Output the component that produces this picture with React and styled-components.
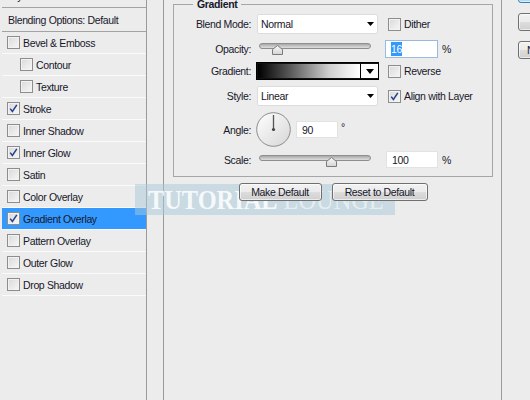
import React from 'react'
import styled, { createGlobalStyle } from 'styled-components'

const Global = createGlobalStyle`
  html, body {
    margin: 0;
    padding: 0;
    background: #ececec;
    overflow: hidden;
  }
  body {
    font-family: 'Liberation Sans', Arial, sans-serif;
    font-size: 10.5px;
    letter-spacing: -0.35px;
    color: #17172a;
  }
`

const Page = styled.div`
  position: relative;
  display: flex;
  width: 530px;
  height: 400px;
  overflow: hidden;
  background: #ececec;
`

/* left list of effects */

const List = styled.div`
  flex: none;
  width: 147px;
  box-sizing: border-box;
  margin-top: -15px;
  padding-left: 2px;
  border-right: 1px solid #9a9a9a;
`

const Item = styled.div`
  display: flex;
  align-items: center;
  gap: 3px;
  box-sizing: border-box;
  height: ${ p => p.h || 22 }px;
  padding-left: ${ p => p.indent ? 18 : p.plain ? 6 : 5 }px;
  border-bottom: 1px solid ${ p => p.dark ? '#a3a3a3' : '#fafafa' };
  background: ${ p => p.active ? '#3399ff' : 'transparent' };
  white-space: nowrap;
`

const Box = styled.span`
  flex: none;
  display: inline-flex;
  align-items: center;
  justify-content: center;
  width: 13px;
  height: 13px;
  box-sizing: border-box;
  border: 1px solid #8d8d8d;
  background: linear-gradient(135deg, #d9d9d9, #f7f7f7);
  box-shadow: inset 0 0 0 1px #f2f2f2;
`

const Check = ({ checked }) => (
  <Box>
    {
      checked &&
        <svg width='11' height='11' viewBox='0 0 11 11'>
          <path d='M2.2 5.6 L4.4 8.4 L8.8 1.8' fill='none' stroke='#233f8f' strokeWidth='1.5' />
        </svg>
    }
  </Box>
)

const effects = [
  { label: 'Bevel & Emboss' },
  { label: 'Contour', indent: true },
  { label: 'Texture', indent: true },
  { label: 'Stroke', checked: true },
  { label: 'Inner Shadow' },
  { label: 'Inner Glow', checked: true },
  { label: 'Satin' },
  { label: 'Color Overlay' },
  { label: 'Gradient Overlay', checked: true, active: true },
  { label: 'Pattern Overlay' },
  { label: 'Outer Glow' },
  { label: 'Drop Shadow' },
]

/* centre frame */

const Frame = styled.div`
  flex: none;
  display: flex;
  flex-direction: column;
  width: 339px;
  box-sizing: border-box;
  margin-left: 16px;
  padding: 0 8px 0 9px;
  border-left: 1px solid #9a9a9a;
  border-right: 1px solid #9a9a9a;
`

const Group = styled.fieldset`
  margin: -2px 0 0;
  padding: 3px 0 8px;
  border: 1px solid #a6a6a6;
  min-width: 0;
`

const Legend = styled.legend`
  margin-left: 19px;
  padding: 0 4px;
  font-weight: bold;
  line-height: 13px;
`

const Row = styled.div`
  display: flex;
  align-items: center;
  height: ${ p => p.h }px;
  margin-top: ${ p => p.mt || 0 }px;
`

const Label = styled.span`
  flex: none;
  width: 77px;
  margin-right: 6px;
  text-align: right;
`

const Select = styled.div`
  flex: none;
  display: flex;
  align-items: center;
  justify-content: space-between;
  width: 121px;
  height: 20px;
  box-sizing: border-box;
  padding: 0 3px 0 3px;
  background: #fff;
  border: 1px solid #dcdcdc;
  border-radius: 2px;
`

const Arrow = ({ w = 7, h = 4 }) => (
  <svg width={ w } height={ h } viewBox={ `0 0 ${ w } ${ h }` }>
    <path d={ `M0 0 H${ w } L${ w / 2 } ${ h } Z` } fill='#000' />
  </svg>
)

const Option = styled.label`
  display: flex;
  align-items: center;
  gap: 3px;
  margin-left: ${ p => p.ml || 10 }px;
  white-space: nowrap;
`

const Field = styled.div`
  flex: none;
  display: flex;
  align-items: center;
  width: ${ p => p.w }px;
  height: ${ p => p.h || 18 }px;
  box-sizing: border-box;
  margin-left: ${ p => p.ml || 0 }px;
  padding-left: 5px;
  background: #fff;
  border: 1px solid ${ p => p.focus ? '#95bbe2' : '#e2e2e2' };
`

const Selected = styled.span`
  background: #3399ff;
  color: #fff;
  padding: 1px 0;
`

const Unit = styled.span`
  margin-left: 4px;
`

const Degree = styled.span`
  align-self: flex-start;
  margin: 9px 0 0 3px;
`

const Slider = styled.div`
  position: relative;
  flex: none;
  width: 120px;
  height: 18px;
  align-self: flex-start;
  padding-top: ${ p => p.top }px;
  box-sizing: border-box;
`

const Track = styled.div`
  margin-left: 2px;
  width: 112px;
  height: 6px;
  box-sizing: border-box;
  border: 1px solid #8e8e8e;
  border-radius: 3px;
  background: linear-gradient(#a9a9a9, #dedede);
`

const Thumb = styled.svg`
  position: absolute;
  top: ${ p => p.top }px;
`

const SliderControl = ({ value, min, max, top }) => {
  const x = 2 + ( value - min ) / ( max - min ) * 112 - 5
  return (
    <Slider top={ top }>
      <Track />
      <Thumb top={ top + 2 } width='11' height='10' viewBox='0 0 11 10' style={{ left: x }}>
        <defs>
          <linearGradient id='thumbFill' x1='0' y1='0' x2='0' y2='1'>
            <stop offset='0' stopColor='#fafafa' />
            <stop offset='1' stopColor='#d4d4d4' />
          </linearGradient>
        </defs>
        <path d='M0.5 9.5 V4.5 L5.5 0.5 L10.5 4.5 V9.5 Z' fill='url(#thumbFill)' stroke='#7a7a7a' />
      </Thumb>
    </Slider>
  )
}

const GradientPicker = styled.div`
  flex: none;
  display: flex;
  width: 123px;
  height: 18px;
  box-sizing: border-box;
  margin-left: -1px;
  border: 1px solid #000;
  box-shadow: inset 0 0 0 1px #222;
`

const Ramp = styled.div`
  flex: 1;
  background: linear-gradient(to right, #000 0%, #555 30%, #cfcfcf 70%, #fff 100%);
  border: 1px solid #111;
  border-right: none;
`

const Drop = styled.div`
  flex: none;
  display: flex;
  align-items: center;
  justify-content: center;
  width: 17px;
  background: #fff;
  border-left: 1px solid #000;
  border-top: 1px solid #111;
  border-bottom: 1px solid #111;
`

const Dial = styled.svg`
  flex: none;
  margin-left: -1px;
`

const Buttons = styled.div`
  position: relative;
  z-index: 1;
  display: flex;
  justify-content: center;
  gap: 10px;
  margin-top: 6px;
`

const Button = styled.div`
  flex: none;
  display: flex;
  align-items: center;
  justify-content: ${ p => p.left ? 'flex-start' : 'center' };
  width: ${ p => p.w }px;
  height: 18px;
  box-sizing: border-box;
  padding-left: ${ p => p.left ? 8 : 0 }px;
  border: 1px solid ${ p => p.primary ? '#3c7fb1' : '#707070' };
  border-radius: 3px;
  background: ${ p => p.primary
    ? 'linear-gradient(#eaf6fd, #d9f0fc 50%, #bee6fd 51%, #a7d9f5)'
    : 'linear-gradient(#f2f2f2, #ebebeb 50%, #dddddd 51%, #cfcfcf)' };
  box-shadow: inset 0 0 0 1px rgba(255, 255, 255, 0.6);
  white-space: nowrap;
`

/* right column */

const Side = styled.div`
  flex: none;
  display: flex;
  flex-direction: column;
  gap: 10px;
  margin: -15px 0 0 16px;
`

/* watermark overlay */

const Watermark = styled.div`
  position: absolute;
  left: 135px;
  top: 184px;
  width: 260px;
  height: 31px;
  overflow: hidden;
  background: rgba(168, 200, 216, 0.5);
  pointer-events: none;
`

const Mark = styled.div`
  padding-left: 13px;
  font-family: 'Liberation Serif', 'Times New Roman', serif;
  font-size: 28px;
  line-height: 31px;
  letter-spacing: 0;
  white-space: nowrap;
  transform: scaleX(0.87);
  transform-origin: 13px 0;
  color: rgba(255, 255, 255, 0.55);
`

const Bold = styled.span`
  font-weight: bold;
  color: rgba(255, 255, 255, 0.85);
`

export default () => (
  <Page>
    <Global />

    <List>
      <Item h={ 23 } plain dark>Styles</Item>
      <Item h={ 24 } plain dark>Blending Options: Default</Item>
      {
        effects.map(e => (
          <Item key={ e.label } indent={ e.indent } active={ e.active }>
            <Check checked={ e.checked } />
            { e.label }
          </Item>
        ))
      }
    </List>

    <Frame>
      <Group>
        <Legend>Gradient</Legend>

        <Row h={ 20 }>
          <Label>Blend Mode:</Label>
          <Select>Normal<Arrow /></Select>
          <Option><Check />Dither</Option>
        </Row>

        <Row h={ 18 } mt={ 6 }>
          <Label>Opacity:</Label>
          <SliderControl value={ 16 } min={ 0 } max={ 100 } top={ 3 } />
          <Field w={ 53 } ml={ 8 } focus><Selected>16</Selected></Field>
          <Unit>%</Unit>
        </Row>

        <Row h={ 18 } mt={ 4 }>
          <Label>Gradient:</Label>
          <GradientPicker>
            <Ramp />
            <Drop><Arrow w={ 8 } h={ 5 } /></Drop>
          </GradientPicker>
          <Option ml={ 9 }><Check />Reverse</Option>
        </Row>

        <Row h={ 20 } mt={ 6 }>
          <Label>Style:</Label>
          <Select>Linear<Arrow /></Select>
          <Option><Check checked />Align with Layer</Option>
        </Row>

        <Row h={ 35 } mt={ 6 }>
          <Label>Angle:</Label>
          <Dial width='35' height='35' viewBox='0 0 35 35'>
            <defs>
              <linearGradient id='dialFill' x1='0' y1='0' x2='1' y2='1'>
                <stop offset='0' stopColor='#ffffff' />
                <stop offset='1' stopColor='#d6d6d6' />
              </linearGradient>
            </defs>
            <circle cx='17.5' cy='17.5' r='16.8' fill='url(#dialFill)' stroke='#8c8c8c' />
            <line x1='17.5' y1='17.5' x2='17.5' y2='3' stroke='#555' strokeWidth='1.3' />
            <circle cx='17.5' cy='17.5' r='1.6' fill='#444' />
          </Dial>
          <Field w={ 42 } h={ 17 } ml={ 5 }>90</Field>
          <Degree>°</Degree>
        </Row>

        <Row h={ 17 } mt={ 4 }>
          <Label>Scale:</Label>
          <SliderControl value={ 100 } min={ 10 } max={ 150 } top={ 4 } />
          <Field w={ 52 } h={ 17 } ml={ 9 }>100</Field>
          <Unit>%</Unit>
        </Row>
      </Group>

      <Buttons>
        <Button w={ 83 }>Make Default</Button>
        <Button w={ 96 }>Reset to Default</Button>
      </Buttons>
    </Frame>

    <Side>
      <Button w={ 80 } primary>OK</Button>
      <Button w={ 80 }>Cancel</Button>
      <Button w={ 80 } left>New Style...</Button>
    </Side>

    <Watermark>
      <Mark><Bold>TUTORIAL</Bold> LOUNGE</Mark>
    </Watermark>
  </Page>
)
